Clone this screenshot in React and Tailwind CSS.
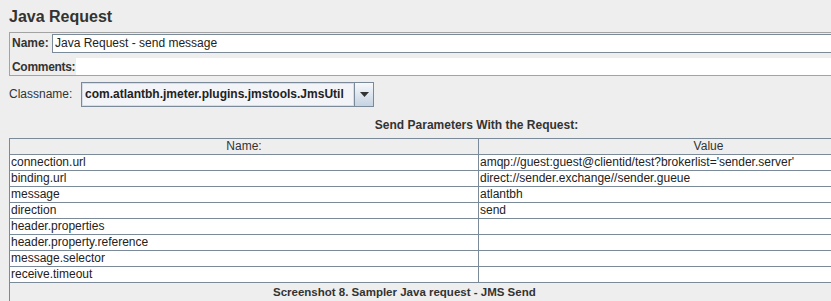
import React from "react";

const rows = [
  ["connection.url", "amqp://guest:guest@clientid/test?brokerlist='sender.server'"],
  ["binding.url", "direct://sender.exchange//sender.gueue"],
  ["message", "atlantbh"],
  ["direction", "send"],
  ["header.properties", ""],
  ["header.property.reference", ""],
  ["message.selector", ""],
  ["receive.timeout", ""],
];

export default function App() {
  return (
    <div className="w-[831px] h-[301px] overflow-hidden bg-[#eeeeee] font-['Liberation_Sans',Arial,sans-serif] text-[12px] text-[#222]">
      <div className="w-[960px]">
        <div className="h-[32px] pl-[9px] pt-[8px] text-[16px] font-bold leading-[18px] text-[#333]">
          Java Request
        </div>
        <div className="ml-[9px] h-[44px] border border-[#a3a3a3] flex flex-col">
          <div className="flex pt-[1px] h-[20px]">
            <div className="w-[42px] shrink-0 pl-[2px] font-bold text-[#333] leading-[19px]">Name:</div>
            <div className="flex-1 h-[19px] border border-[#7a8a99] bg-white pl-[2px] leading-[17px] text-[#222]">
              Java Request - send message
            </div>
          </div>
          <div className="flex mt-[5px] h-[17px]">
            <div className="w-[66px] shrink-0 whitespace-nowrap pl-[2px] font-bold text-[#333] leading-[19px] tracking-[-0.3px]">
              Comments:
            </div>
            <div className="flex-1 bg-white"></div>
          </div>
        </div>
        <div className="flex items-center mt-[6px] h-[25px]">
          <div className="w-[81px] shrink-0 pl-[9px] text-[#333] leading-[25px]">Classname:</div>
          <div className="w-[293px] h-[25px] border border-[#7a8a99] flex bg-[#f2f4f7]">
            <div className="flex-1 border border-[#d4dde8] pl-[2px] font-bold text-[#222] leading-[21px]">
              com.atlantbh.jmeter.plugins.jmstools.JmsUtil
            </div>
            <div className="w-[19px] border-l border-[#7a8a99] bg-gradient-to-b from-[#f7f9fb] to-[#c5d3e2] flex items-center justify-center">
              <svg width="9" height="5" viewBox="0 0 9 5">
                <path d="M0 0 H9 L4.5 5 Z" fill="#333" />
              </svg>
            </div>
          </div>
        </div>
        <div className="w-[953px] h-[31px] pt-[11px] text-center font-bold text-[#333] leading-[15px]">
          Send Parameters With the Request:
        </div>
        <div className="ml-[9px] w-[929px] border-l border-[#7a8a99]">
          <div className="border-t border-[#7a8a99]">
            <div className="flex h-[16px] border-b border-[#7a8a99]">
              <div className="w-[469px] border-r border-[#7a8a99] text-center leading-[15px] text-[#333]">Name:</div>
              <div className="flex-1 text-center leading-[15px] text-[#333]">Value</div>
            </div>
            {rows.map(([n, v]) => (
              <div key={n} className="flex h-[16px] border-b border-[#7a8a99] bg-white">
                <div className="w-[469px] border-r border-[#7a8a99] pl-[1px] leading-[15px]">{n}</div>
                <div className="flex-1 pl-[1px] leading-[15px] whitespace-nowrap">{v}</div>
              </div>
            ))}
          </div>
          <div className="h-[18px] pl-[263px] pt-[2px] font-bold text-[11.5px] text-[#333] leading-[15px]">
            Screenshot 8. Sampler Java request - JMS Send
          </div>
        </div>
      </div>
    </div>
  );
}
